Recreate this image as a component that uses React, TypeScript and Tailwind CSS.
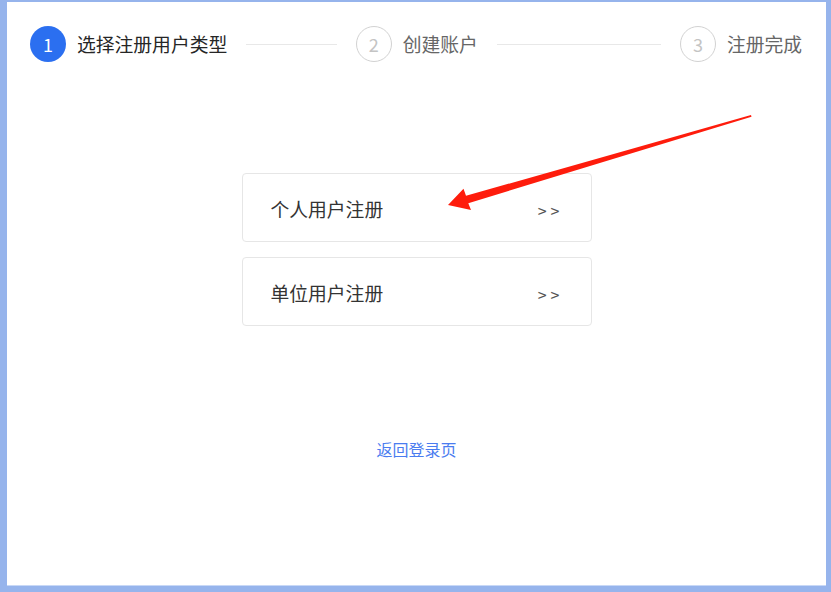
import React from "react";

const font = { fontFamily: '"Microsoft YaHei", "Noto Sans CJK SC", "Noto Sans", sans-serif' };

function Circle({ n, active }: { n: number; active?: boolean }) {
  return active ? (
    <div className="w-[36px] h-[36px] rounded-full bg-[#2b6ff0] text-white flex items-center justify-center text-[18px] shrink-0">
      {n}
    </div>
  ) : (
    <div className="w-[36px] h-[36px] rounded-full border-[1.5px] border-[#d2d2d2] text-[#c4c4c4] flex items-center justify-center text-[18px] shrink-0">
      {n}
    </div>
  );
}

function Card({ label }: { label: string }) {
  return (
    <div className="w-[350px] h-[69px] border border-[#e6e6e6] rounded-[4px] bg-white flex items-center justify-between pl-[28px] pr-[27px] cursor-pointer">
      <span className="text-[18.8px] text-[#333] leading-none pt-[4px]">{label}</span>
      <span className="text-[16px] text-[#555] tracking-[4px] leading-none pt-[5px]">&gt;&gt;</span>
    </div>
  );
}

export default function App() {
  return (
    <div className="w-[831px] h-[592px] bg-[#96b4ec] pt-[2px] pl-[7px] pr-[5px] pb-[6px] relative" style={font}>
      <div className="w-full h-full bg-white flex flex-col border-b border-[#c8d8f6]">
        <div className="flex items-center pl-[23px] pr-[24px] pt-[24px]">
          <Circle n={1} active />
          <span className="ml-[11px] text-[18.8px] text-[#262626] whitespace-nowrap">选择注册用户类型</span>
          <div className="mx-[19px] w-[91px] h-px bg-[#e8e8e8]" />
          <Circle n={2} />
          <span className="ml-[11px] text-[18.8px] text-[#666] whitespace-nowrap">创建账户</span>
          <div className="mx-[19px] w-[165px] h-px bg-[#e8e8e8]" />
          <Circle n={3} />
          <span className="ml-[11px] text-[18.8px] text-[#666] whitespace-nowrap">注册完成</span>
        </div>
        <div className="flex flex-col items-center mt-[111px] gap-[15px]">
          <Card label="个人用户注册" />
          <Card label="单位用户注册" />
        </div>
        <div className="flex justify-center mt-[111px]">
          <a className="text-[16px] text-[#4a7cf0] cursor-pointer">返回登录页</a>
        </div>
      </div>
      <svg className="absolute left-0 top-0 pointer-events-none" width="831" height="592" viewBox="0 0 831 592">
        <polygon
          points="448,205 463.5,188.8 466,195.8 751,115 751.5,116.8 468.3,203.2 471,210"
          fill="#fe1c0c"
        />
      </svg>
    </div>
  );
}
